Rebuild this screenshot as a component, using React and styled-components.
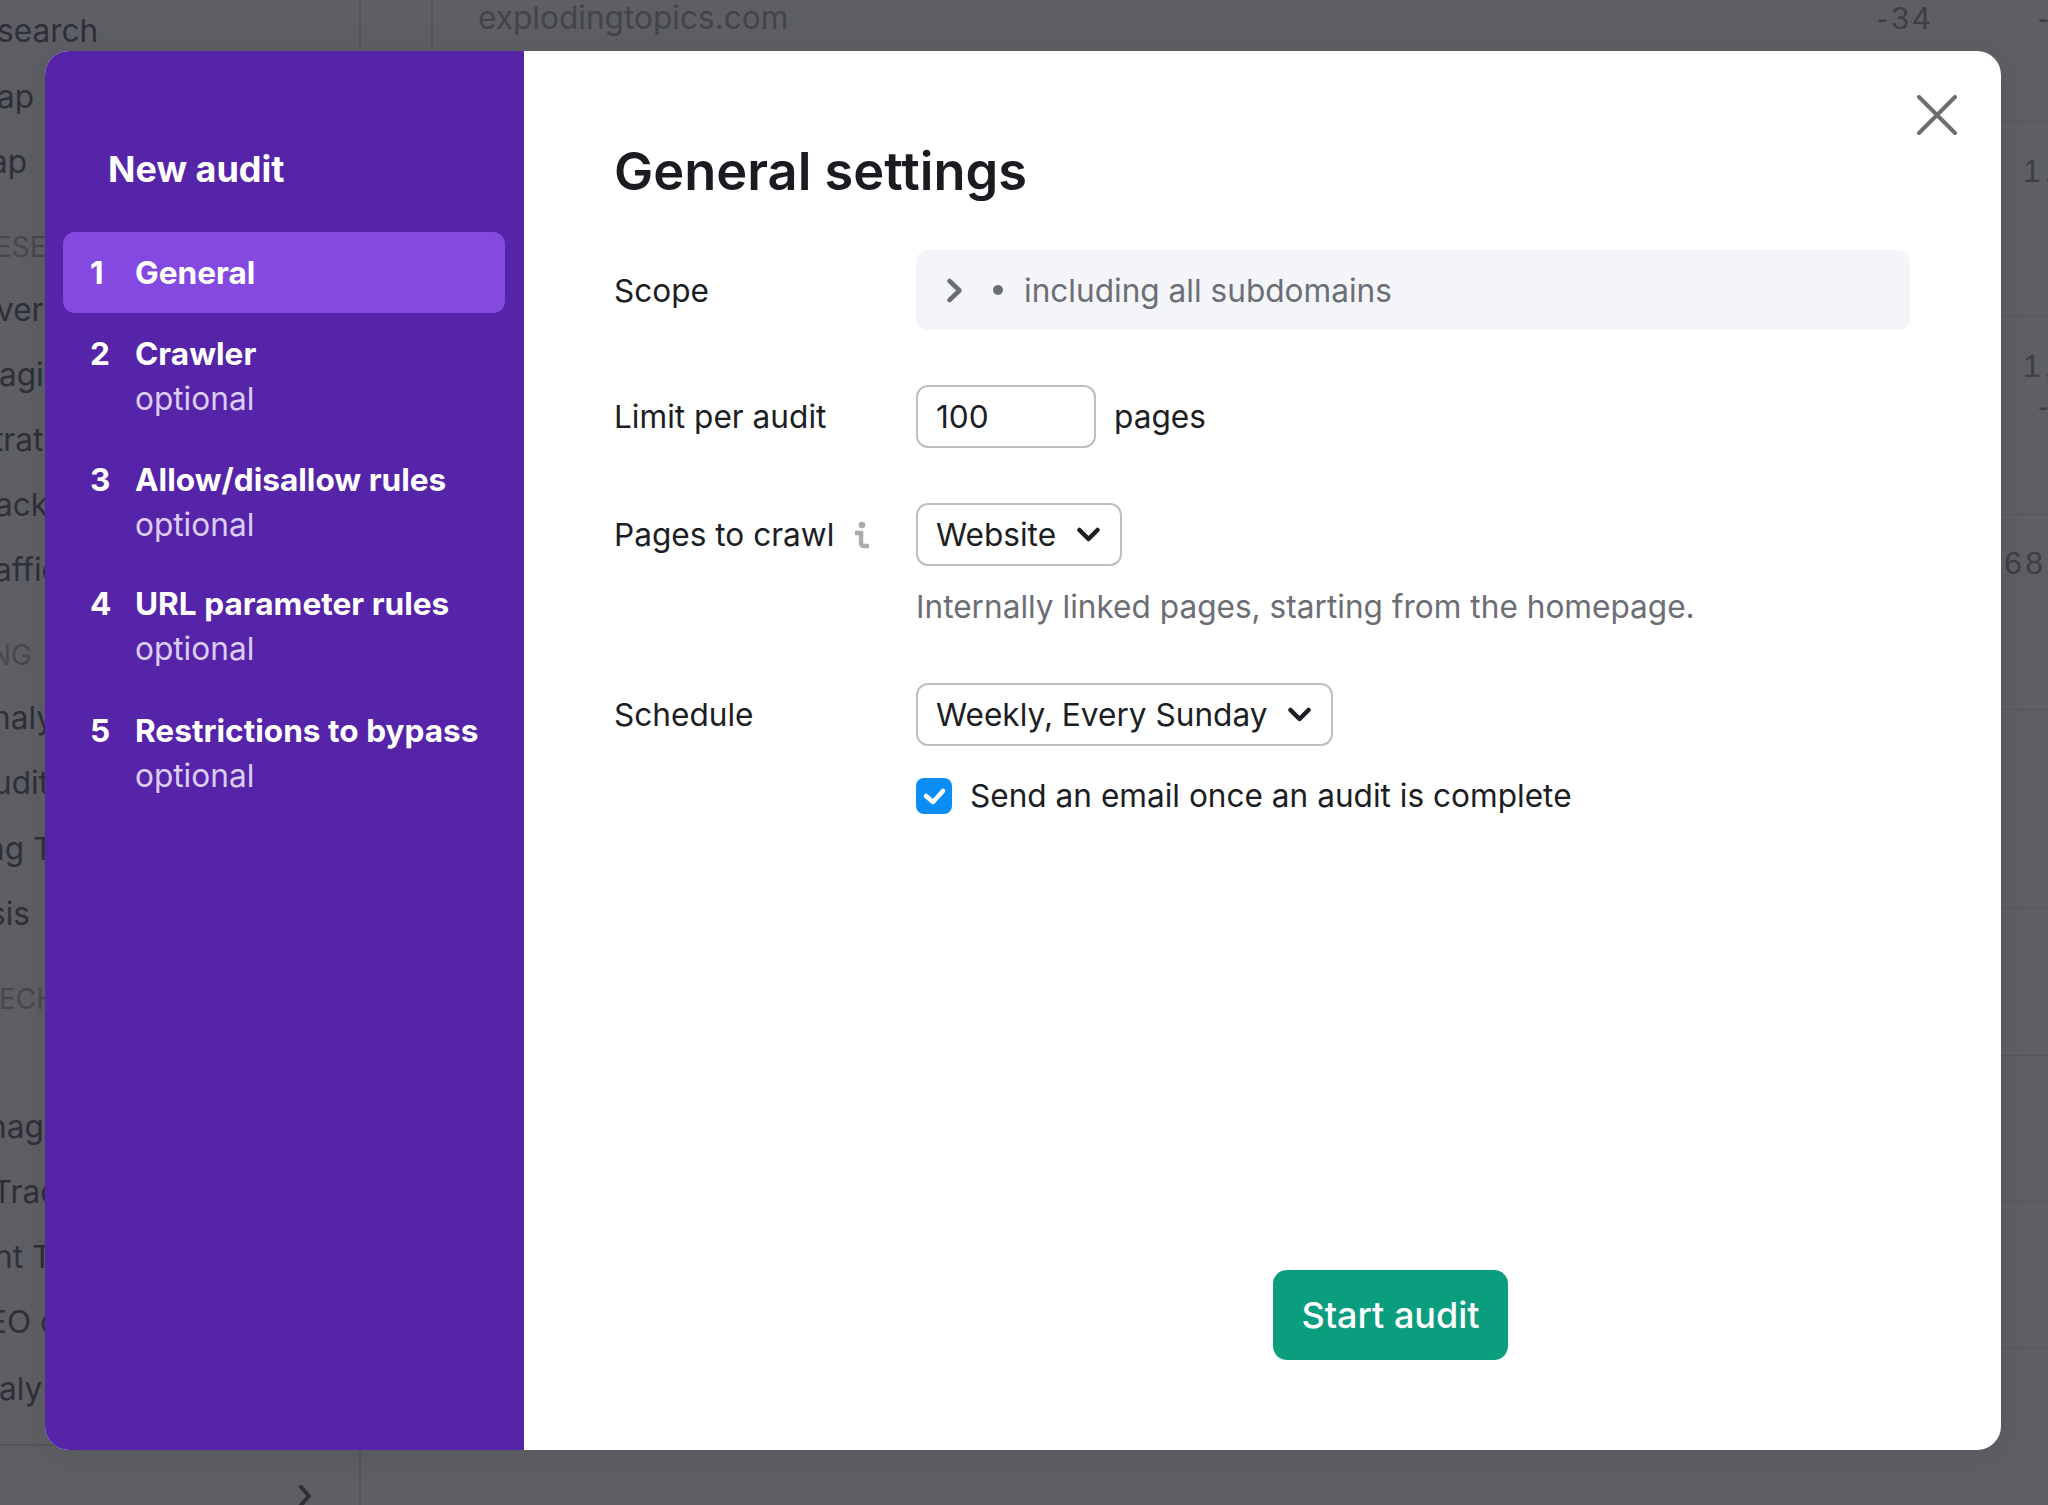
import React from "react";
import styled, { createGlobalStyle } from "styled-components";

const Global = createGlobalStyle`
  html, body { margin: 0; padding: 0; background: #5e5f64; }
  * { box-sizing: border-box; }
  body { font-family: Inter, "Liberation Sans", sans-serif; }
`;

const Page = styled.div`
  position: relative;
  width: 2048px;
  height: 1505px;
  overflow: hidden;
  background: #5e5f64;
  display: flex;
`;

const SideMenu = styled.aside`
  width: 361px;
  height: 1505px;
  flex: none;
  border-right: 2px solid #545559;
  display: flex;
  flex-direction: column;
  overflow: hidden;
`;

const MenuRow = styled.div`
  height: 65px;
  line-height: 65px;
  flex: none;
  white-space: nowrap;
  margin-top: ${(p) => p.$top || 0}px;
  margin-left: ${(p) => p.$shift || 0}px;
  font-size: ${(p) => (p.$section ? 28 : 31.6)}px;
  color: ${(p) => (p.$section ? "#47484e" : "#2e2f38")};
`;

const MenuFoot = styled.div`
  margin-top: auto;
  height: 61px;
  border-top: 2px solid #545559;
  display: flex;
  justify-content: flex-end;
  align-items: flex-end;
  padding-right: 47px;
  color: #2e2f38;
`;

const Table = styled.main`
  flex: 1;
  min-width: 0;
  display: flex;
  flex-direction: column;
  overflow: hidden;
`;

const Row = styled.div`
  height: ${(p) => p.$h}px;
  flex: none;
  display: flex;
  border-bottom: 1.5px solid #55565b;
  overflow: hidden;
  font-size: 31.6px;
  line-height: 36px;
  white-space: nowrap;
`;

const Spacer = styled.div`
  width: 72px;
  flex: none;
  border-right: ${(p) => (p.$line ? "2px solid #545559" : "0")};
`;

const Domain = styled.div`
  width: 1444px;
  flex: none;
  padding-left: 45px;
  color: #43444a;
`;

const Num = styled.div`
  font-family: "Liberation Sans", sans-serif;
  font-size: 32px;
  letter-spacing: 3.5px;
  color: #3d3e46;
  flex: none;
  width: ${(p) => p.$w || "auto"};
  margin-left: ${(p) => p.$left || 0}px;
  margin-top: ${(p) => p.$top || 0}px;
`;

const Stack = styled.div`
  display: flex;
  flex-direction: column;
`;

const Modal = styled.section`
  position: absolute;
  left: 45px;
  top: 51px;
  width: 1956px;
  height: 1399px;
  border-radius: 24px;
  background: #fff;
  display: flex;
  overflow: hidden;
  box-shadow: 0 4px 30px rgba(0, 0, 0, 0.08);
`;

const Wizard = styled.nav`
  width: 479px;
  flex: none;
  background: #5524a8;
  color: #fff;
  padding: 96px 19px 0 18px;
`;

const WizardTitle = styled.h2`
  margin: 0 0 40px;
  padding-left: 45px;
  font-size: 36px;
  line-height: 45px;
  font-weight: 700;
`;

const Step = styled.div`
  display: flex;
  height: ${(p) => p.$h}px;
  padding: 18px 0 0 27px;
  border-radius: 12px;
  background: ${(p) => (p.$active ? "#8449e0" : "transparent")};
`;

const StepNum = styled.span`
  width: 45px;
  flex: none;
  font-size: 31.6px;
  line-height: 45px;
  font-weight: 700;
`;

const StepName = styled.div`
  font-size: 31.6px;
  line-height: 45px;
  font-weight: 700;
`;

const StepHint = styled.div`
  font-size: 31.6px;
  line-height: 45px;
  font-weight: 400;
  color: #dccdf6;
`;

const Content = styled.div`
  flex: 1;
  min-width: 0;
  padding: 0 91px 0 90px;
  display: flex;
  flex-direction: column;
`;

const Title = styled.h1`
  margin: 85px 0 43px;
  font-size: 52.4px;
  line-height: 71px;
  font-weight: 600;
  color: #1b1c21;
`;

const Close = styled.button`
  position: absolute;
  top: 44px;
  right: 44px;
  width: 40px;
  height: 40px;
  padding: 0;
  border: 0;
  background: none;
  color: #6c6e72;
`;

const Field = styled.div`
  display: grid;
  grid-template-columns: 302px 1fr;
  align-items: center;
  margin-top: ${(p) => p.$top || 0}px;
`;

const Label = styled.div`
  font-size: 31.6px;
  line-height: 44px;
  padding-top: 1px;
  color: #1d1e24;
  display: flex;
  align-items: center;
  gap: 20px;
`;

const ScopeBox = styled.div`
  height: 80px;
  border-radius: 12px;
  background: #f4f5f9;
  display: flex;
  align-items: center;
  padding-left: 30px;
  font-size: 31.6px;
  color: #6c6e75;
`;

const Bullet = styled.span`
  width: 10px;
  height: 10px;
  border-radius: 50%;
  background: #6c6e75;
  margin: 0 21px 0 28px;
`;

const Inline = styled.div`
  display: flex;
  align-items: center;
  gap: 18px;
  font-size: 31.6px;
  color: #1d1e24;
`;

const NumberBox = styled.div`
  width: 180px;
  height: 63px;
  border: 2px solid #bcbec3;
  border-radius: 12px;
  padding-left: 18px;
  line-height: 59px;
  font-size: 31.6px;
  color: #1d1e24;
`;

const Select = styled.div`
  display: inline-flex;
  align-items: center;
  gap: 21px;
  height: 63px;
  padding: 0 20px 0 18px;
  border: 2px solid #bcbec3;
  border-radius: 12px;
  font-size: 31.6px;
  color: #1d1e24;
`;

const Help = styled.div`
  margin: 19px 0 0 302px;
  font-size: 31.6px;
  line-height: 44px;
  color: #6c6e75;
`;

const CheckRow = styled.div`
  display: flex;
  align-items: center;
  gap: 18px;
  margin: 32px 0 0 302px;
  font-size: 31.6px;
  line-height: 36px;
  color: #1d1e24;
`;

const CheckBox = styled.span`
  width: 36px;
  height: 36px;
  flex: none;
  border-radius: 8px;
  background: #0a8df5;
  display: flex;
`;

const Footer = styled.div`
  margin-top: auto;
  padding: 0 0 90px 659px;
`;

const Start = styled.button`
  width: 235px;
  height: 90px;
  border: 0;
  border-radius: 14px;
  background: #0a9e7e;
  color: #fff;
  font-family: inherit;
  font-size: 36px;
  font-weight: 500;
`;

const Chevron = ({ dir }) =>
  dir === "right" ? (
    <svg width="19" height="27" viewBox="0 0 19 27" fill="none" stroke="currentColor" strokeWidth="4.500" strokeLinecap="round" strokeLinejoin="round">
      <path d="M3.500 4l10 9.500-10 9.500" />
    </svg>
  ) : (
    <svg width="23" height="15" viewBox="0 0 23 15" fill="none" stroke="#1d1e24" strokeWidth="4.500" strokeLinecap="round" strokeLinejoin="round">
      <path d="M2.500 3l9 9 9-9" />
    </svg>
  );

const menu = [
  { t: "search", s: -3, top: -2 },
  { t: "ap", s: -3, top: 1 },
  { t: "ap", s: -10 },
  { t: "ESE", s: -5, top: 21, sec: true },
  { t: "ver", s: -4, top: -3 },
  { t: "agi", s: -1 },
  { t: "trat", s: -7 },
  { t: "ack", s: -5 },
  { t: "affic", s: -6 },
  { t: "NG", s: -10, top: 21, sec: true },
  { t: "naly", s: -8, top: -3 },
  { t: "udit", s: -7 },
  { t: "ng T", s: -14, top: 1 },
  { t: "sis", s: -11 },
  { t: "ECH", s: -1, top: 21, sec: true },
  { t: "nag", s: -12, top: 62 },
  { t: "Trac", s: -8 },
  { t: "nt T", s: -6 },
  { t: "EO c", s: -12 },
  { t: "aly", s: -1, top: 2 },
];

const steps = [
  { n: 1, name: "General", h: 81, active: true },
  { n: 2, name: "Crawler", h: 126 },
  { n: 3, name: "Allow/disallow rules", h: 124 },
  { n: 4, name: "URL parameter rules", h: 127 },
  { n: 5, name: "Restrictions to bypass", h: 126 },
];

export default function App() {
  return (
    <Page>
      <Global />
      <SideMenu>
        {menu.map((m, i) => (
          <MenuRow key={i} $shift={m.s} $top={m.top} $section={m.sec}>
            {m.t}
          </MenuRow>
        ))}
        <MenuFoot>
          <svg width="14" height="20" viewBox="0 0 14 20" fill="none" stroke="currentColor" strokeWidth="4" strokeLinecap="round" strokeLinejoin="round">
            <path d="M3 2l8 9-8 9" />
          </svg>
        </MenuFoot>
      </SideMenu>
      <Table>
        <Row $h={122}>
          <Spacer $line />
          <Domain>explodingtopics.com</Domain>
          <Num $w="161px">-34</Num>
          <Num>-</Num>
        </Row>
        <Row $h={195}>
          <Spacer />
          <Num $left={1590} $top={31}>1,</Num>
        </Row>
        <Row $h={198}>
          <Spacer />
          <Stack>
            <Num $left={1590} $top={31}>1,</Num>
            <Num $left={1605} $top={4}>-</Num>
          </Stack>
        </Row>
        <Row $h={195}>
          <Spacer />
          <Num $left={1571} $top={30}>68,</Num>
        </Row>
        <Row $h={199}><Spacer /></Row>
        <Row $h={147}><Spacer /></Row>
        <Row $h={146}><Spacer /></Row>
        <Row $h={146}><Spacer /></Row>
      </Table>

      <Modal>
        <Wizard>
          <WizardTitle>New audit</WizardTitle>
          {steps.map((s) => (
            <Step key={s.n} $h={s.h} $active={s.active}>
              <StepNum>{s.n}</StepNum>
              <div>
                <StepName>{s.name}</StepName>
                {!s.active && <StepHint>optional</StepHint>}
              </div>
            </Step>
          ))}
        </Wizard>
        <Content>
          <Title>General settings</Title>
          <Close aria-label="Close">
            <svg width="40" height="40" viewBox="0 0 40 40" fill="none" stroke="currentColor" strokeWidth="4" strokeLinecap="round">
              <path d="M2 2l36 36M38 2L2 38" />
            </svg>
          </Close>
          <Field>
            <Label>Scope</Label>
            <ScopeBox>
              <Chevron dir="right" />
              <Bullet />
              including all subdomains
            </ScopeBox>
          </Field>
          <Field $top={55}>
            <Label>Limit per audit</Label>
            <Inline>
              <NumberBox>100</NumberBox>
              pages
            </Inline>
          </Field>
          <Field $top={55}>
            <Label>
              Pages to crawl
              <svg width="15" height="28" viewBox="0 0 15 28" fill="none" stroke="#a9abb0" strokeWidth="4.500">
                <circle cx="8" cy="4" r="3.300" fill="#a9abb0" stroke="none" />
                <path d="M1 12h6v9c0 3 1 4 3 4h5" />
              </svg>
            </Label>
            <div>
              <Select>
                Website
                <Chevron />
              </Select>
            </div>
          </Field>
          <Help>Internally linked pages, starting from the homepage.</Help>
          <Field $top={54}>
            <Label>Schedule</Label>
            <div>
              <Select>
                Weekly, Every Sunday
                <Chevron />
              </Select>
            </div>
          </Field>
          <CheckRow>
            <CheckBox>
              <svg width="36" height="36" viewBox="0 0 36 36" fill="none" stroke="#fff" strokeWidth="4.500" strokeLinecap="round" strokeLinejoin="round">
                <path d="M10 18l7 6 10-11" />
              </svg>
            </CheckBox>
            Send an email once an audit is complete
          </CheckRow>
          <Footer>
            <Start>Start audit</Start>
          </Footer>
        </Content>
      </Modal>
    </Page>
  );
}
